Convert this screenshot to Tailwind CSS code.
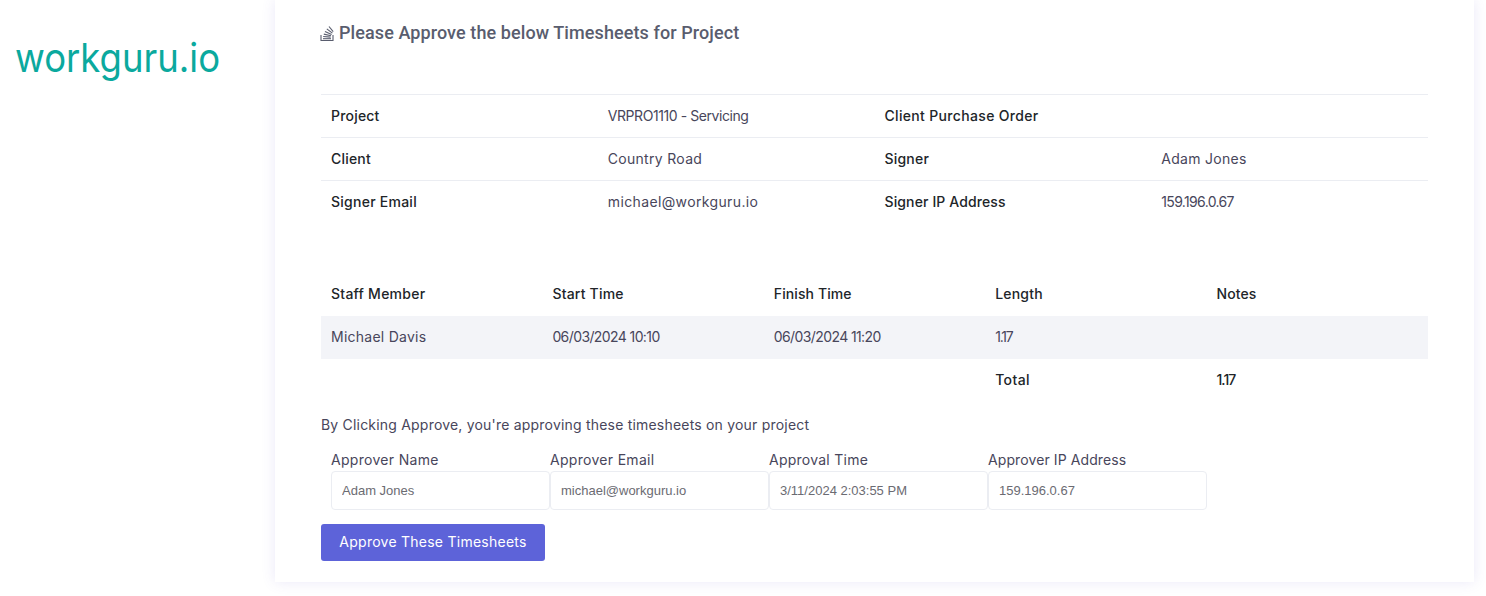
<!DOCTYPE html>
<html lang="en">
<head>
  <meta charset="UTF-8">
  <title>Approve Timesheets</title>
  <script src="https://cdn.jsdelivr.net/npm/@tailwindcss/browser@4"></script>
</head>
<body class="bg-white font-['Inter',sans-serif] text-[14px] text-[#48465b] overflow-hidden">
  <div class="flex h-[596px]">
    <!-- Logo -->
    <div class="w-[275px] shrink-0">
      <svg class="block" width="275" height="100" viewBox="0 0 275 100">
        <text x="15" y="72" textLength="205" lengthAdjust="spacingAndGlyphs" font-family="Inter, sans-serif" font-weight="400" font-size="40" fill="#0ba99e">workguru.io</text>
      </svg>
    </div>

    <!-- Card -->
    <div class="w-[1199px] h-[582px] bg-white shadow-[0_0_13px_rgba(93,78,200,0.13)] px-[46px] pt-[19px]">
      <h3 class="flex items-center gap-[5px] h-[26px] font-['Roboto',sans-serif] font-medium text-[18px] tracking-[0.09px] text-[#595d6e]">
        <svg class="w-[14px] h-[17px] mt-[3px] -ml-[1px]" viewBox="0 0 14 16" fill="none" stroke="#595d6e" stroke-width="1.1">
          <path d="M1 9.5V15H13V9.5"/>
          <path d="M3 13.2H11"/>
          <path d="M3.2 11L10.6 11.6"/>
          <path d="M3.8 8.6L11 10.2"/>
          <path d="M5 6L11.6 9"/>
          <path d="M6.8 3.4L12.4 7.6"/>
          <path d="M9 1L13.2 6.2"/>
        </svg>
        Please Approve the below Timesheets for Project
      </h3>

      <!-- Project details -->
      <table class="w-full table-fixed mt-[49px] border-t border-[#ebedf2]">
        <tbody>
          <tr class="h-[43px] border-b border-[#ebedf2]">
            <td class="pl-[10px] pb-[2px] font-medium text-[#212529] tracking-[0.2px]">Project</td>
            <td class="pl-[10px] pb-[2px] tracking-[-0.43px]">VRPRO1110 - Servicing</td>
            <td class="pl-[10px] pb-[2px] font-medium text-[#212529] tracking-[0.33px]">Client Purchase Order</td>
            <td class="pl-[10px] pb-[2px]"></td>
          </tr>
          <tr class="h-[43px] border-b border-[#ebedf2]">
            <td class="pl-[10px] pb-[2px] font-medium text-[#212529] tracking-[0.2px]">Client</td>
            <td class="pl-[10px] pb-[2px] tracking-[0.3px]">Country Road</td>
            <td class="pl-[10px] pb-[2px] font-medium text-[#212529] tracking-[0.2px]">Signer</td>
            <td class="pl-[10px] pb-[2px] tracking-[0.3px]">Adam Jones</td>
          </tr>
          <tr class="h-[43px]">
            <td class="pl-[10px] pb-[2px] font-medium text-[#212529] tracking-[0.25px]">Signer Email</td>
            <td class="pl-[10px] pb-[2px] tracking-[0.37px]">michael@workguru.io</td>
            <td class="pl-[10px] pb-[2px] font-medium text-[#212529] tracking-[0.12px]">Signer IP Address</td>
            <td class="pl-[10px] pb-[2px] tracking-[-0.65px]">159.196.0.67</td>
          </tr>
        </tbody>
      </table>

      <!-- Timesheets -->
      <table class="w-full table-fixed mt-[49px]">
        <thead>
          <tr class="h-[43px] text-left text-[#212529]">
            <th class="pl-[10px] pb-[2px] font-medium tracking-[0.25px]">Staff Member</th>
            <th class="pl-[10px] pb-[2px] font-medium tracking-[0.2px]">Start Time</th>
            <th class="pl-[10px] pb-[2px] font-medium tracking-[0.1px]">Finish Time</th>
            <th class="pl-[10px] pb-[2px] font-medium tracking-[0.2px]">Length</th>
            <th class="pl-[10px] pb-[2px] font-medium tracking-[0.1px]">Notes</th>
          </tr>
        </thead>
        <tbody>
          <tr class="h-[43px] bg-[#f3f4f8]">
            <td class="pl-[10px] pb-[2px] tracking-[0.25px]">Michael Davis</td>
            <td class="pl-[10px] pb-[2px] tracking-[-0.6px]">06/03/2024 10:10</td>
            <td class="pl-[10px] pb-[2px] tracking-[-0.6px]">06/03/2024 11:20</td>
            <td class="pl-[10px] pb-[2px] tracking-[-1.2px]">1.17</td>
            <td class="pl-[10px] pb-[2px]"></td>
          </tr>
          <tr class="h-[43px] font-medium text-[#212529]">
            <td></td>
            <td></td>
            <td></td>
            <td class="pl-[10px] pb-[2px] tracking-[0.4px]">Total</td>
            <td class="pl-[10px] pb-[2px] tracking-[-1px]">1.17</td>
          </tr>
        </tbody>
      </table>

      <p class="mt-[13px] leading-[20px] tracking-[0.2px]">By Clicking Approve, you're approving these timesheets on your project</p>

      <!-- Approver -->
      <div class="grid grid-cols-[219px_219px_219px_219px] ml-[10px] mt-[15px]">
        <div>
          <label class="block leading-[19px] h-[21px] tracking-[0.3px]">Approver Name</label>
          <input class="w-full h-[39px] px-[10px] border border-[#ebedf2] rounded-[4px] font-['Liberation_Sans',sans-serif] text-[13px] text-[#6b6b72] bg-white" value="Adam Jones">
        </div>
        <div>
          <label class="block leading-[19px] h-[21px] tracking-[0.3px]">Approver Email</label>
          <input class="w-full h-[39px] px-[10px] border border-[#ebedf2] rounded-[4px] font-['Liberation_Sans',sans-serif] text-[13px] text-[#6b6b72] bg-white" value="michael@workguru.io">
        </div>
        <div>
          <label class="block leading-[19px] h-[21px] tracking-[0.25px]">Approval Time</label>
          <input class="w-full h-[39px] px-[10px] border border-[#ebedf2] rounded-[4px] font-['Liberation_Sans',sans-serif] text-[13px] text-[#6b6b72] bg-white" value="3/11/2024 2:03:55 PM">
        </div>
        <div>
          <label class="block leading-[19px] h-[21px] tracking-[0.1px]">Approver IP Address</label>
          <input class="w-full h-[39px] px-[10px] border border-[#ebedf2] rounded-[4px] font-['Liberation_Sans',sans-serif] text-[13px] text-[#6b6b72] bg-white" value="159.196.0.67">
        </div>
      </div>

      <button class="block mt-[14px] w-[224px] h-[37px] pb-[2px] rounded-[3px] bg-[#5d63d9] text-white text-[14px] tracking-[0.25px]">Approve These Timesheets</button>
    </div>
  </div>
</body>
</html>
